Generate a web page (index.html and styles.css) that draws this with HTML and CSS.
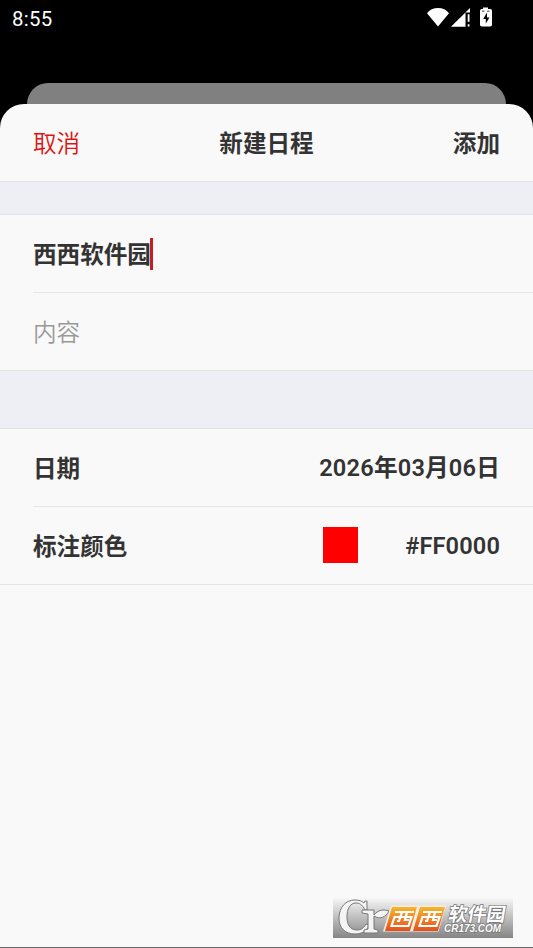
FILE: index.html
```html
<!DOCTYPE html>
<html lang="zh-CN">
<head>
<meta charset="utf-8">
<title>新建日程</title>
<link rel="stylesheet" href="styles.css">
</head>
<body>
<div class="screen">
  <header class="status">
    <span class="time">8:55</span>
    <svg class="status-icons" width="68" height="24" viewBox="0 0 68 24">
      <path fill="#fff" d="M0 6.2C2.400 2.600 6.500.9 11 .9s8.600 1.700 11 5.300L11 19.500z"/>
      <path fill="#fff" d="M24 19.700 43 1v4.500h-4.500v14.200z"/>
      <path fill="#fff" d="M40.700 7.300h1.800v7.500h-1.800zM40.700 17.200h1.800v2.300h-1.800z"/>
      <path fill="#fff" d="M56 .4h5v1.600h2.200q1.800 0 1.800 1.800v13.900q0 1.800-1.800 1.800h-8.400q-1.800 0-1.800-1.800V3.800q0-1.800 1.800-1.800H56z"/>
      <path fill="#000" d="M60 5.500v5h2.500l-3.700 6v-4.600h-2.600zM55 3.700h2.500v.7H55zM60 3.700h2.500v.7H60z"/>
    </svg>
  </header>
  <div class="back-card"></div>
  <main class="sheet">
    <div class="row nav">
      <span class="cancel">取消</span>
      <span class="title">新建日程</span>
      <span class="add">添加</span>
    </div>
    <div class="band"></div>
    <section class="group">
      <div class="row"><span>西西软件园</span><i class="caret"></i></div>
      <div class="row"><span class="placeholder">内容</span></div>
    </section>
    <div class="band tall"></div>
    <section class="group">
      <div class="row between"><span>日期</span><span class="date">2026年03月06日</span></div>
      <div class="row between"><span>标注颜色</span><span class="color"><i class="swatch"></i><span class="hex">#FF0000</span></span></div>
    </section>
    <footer class="foot">
      <svg class="mark" width="180" height="40" viewBox="0 0 180 40">
        <defs>
          <linearGradient id="bg" x2="0" y2="1"><stop stop-color="#f7f7f7"/><stop offset=".5" stop-color="#bdbdbd"/><stop offset="1" stop-color="#858585"/></linearGradient>
          <linearGradient id="or" x2="0" y2="1"><stop stop-color="#f9b52c"/><stop offset="1" stop-color="#e4501e"/></linearGradient>
        </defs>
        <rect width="180" height="40" fill="url(#bg)"/>
        <g fill="#f4f4f4" stroke="#777" stroke-width="1" stroke-linejoin="round">
          <path d="M34 3v9h-2C29 6 26 5 23 5c-6 0-9 6-9 14 0 9 4 13 10 13 4 0 7-2 9-6l3 1c-2 6-7 9-14 9C12 36 6 30 6 20 6 9 13 2 22 2c4 0 7 1 9 3l1-2z"/>
          <path d="M29 12h12v5c4-5 9-6 15-4-3 6-9 9-15 5v13l4 1v3H31v-3l4-1V16l-6-1z"/>
        </g>
        <path d="M58 7.500h55l-7.500 26H50z" fill="#f7eee6"/>
        <path d="M59 9h25l-7 24H52zM87 9h25l-7 24H80z" fill="url(#or)"/>
        <g fill="none" stroke="#fff" stroke-width="2.200">
          <path id="xi" d="M62 14h19M61.500 19h17l-3 9H58.500zM69 14l-3 9h-2M74 14l-2 8h4"/>
          <use href="#xi" x="28"/>
        </g>
        <text class="mark-cn" x="0" y="0" transform="translate(114.500 23) skewX(-10)" textLength="57" lengthAdjust="spacingAndGlyphs">软件园</text>
        <text class="mark-en" x="111" y="33.500" textLength="57" lengthAdjust="spacingAndGlyphs">CR173.COM</text>
      </svg>
    </footer>
  </main>
</div>
</body>
</html>
```

FILE: styles.css
```css
* { box-sizing: border-box; }
body {
  margin: 0;
  background: #000;
  font-family: Roboto, "Noto Sans CJK SC", sans-serif;
  font-size: 23.6px;
  font-weight: 600;
  color: #333;
}
.screen { height: 948px; display: flex; flex-direction: column; overflow: hidden; }
.status {
  height: 83px;
  padding: 7px 40px 0 12px;
  display: flex;
  justify-content: space-between;
  align-items: flex-start;
  color: #fff;
}
.time { font-size: 20.4px; line-height: 24px; font-weight: 450; letter-spacing: .3px; }
.status-icons { margin-right: -2px; }
.back-card { height: 21px; margin: 0 27px; background: #808080; border-radius: 21px 21px 0 0; }
.sheet {
  flex: 1;
  display: flex;
  flex-direction: column;
  background: #f9f9f9;
  border-radius: 24px 24px 0 0;
  border-bottom: 1px solid #666;
}
.row { height: 78px; display: flex; align-items: center; line-height: 36px; padding-right: 33px; }
.row span { padding-top: 2px; }
.nav {
  display: grid;
  grid-template-columns: 1fr auto 1fr;
  padding-left: 33px;
  border-bottom: 1px solid #e4e4e7;
}
.row .cancel { color: #dc1414; font-weight: 350; }
.add { text-align: right; }
.band { height: 33px; background: #eeeff5; border-bottom: 1px solid #e4e4e7; }
.tall { height: 58px; }
.group { padding-left: 33px; border-bottom: 1px solid #e4e4e7; }
.group .row + .row { border-top: 1px solid #e6e6e6; }
.group .row:first-child { height: 77px; }
.between { justify-content: space-between; }
.caret { width: 3px; height: 32px; background: #c81e1e; margin-left: -1px; }
.placeholder { color: #999; font-weight: 350; }
.row .date { letter-spacing: .2px; padding-top: 1px; }
.row .color { display: flex; align-items: center; gap: 47px; padding: 0; }
.row .hex { padding: 0; letter-spacing: .12px; }
.swatch { width: 35px; height: 36px; background: #f00; margin-top: -2px; }
.foot { margin-top: auto; display: flex; justify-content: flex-end; padding: 0 20px 9px 0; }
.mark { display: block; }
.mark-cn {
  font: 700 19px "Noto Sans CJK SC", sans-serif;
  fill: #fff; stroke: #777; stroke-width: 1.5px; paint-order: stroke;
}
.mark-en {
  font: italic 700 10px "Liberation Sans", sans-serif;
  fill: #fff; stroke: #777; stroke-width: 1.5px; paint-order: stroke;
}
```
